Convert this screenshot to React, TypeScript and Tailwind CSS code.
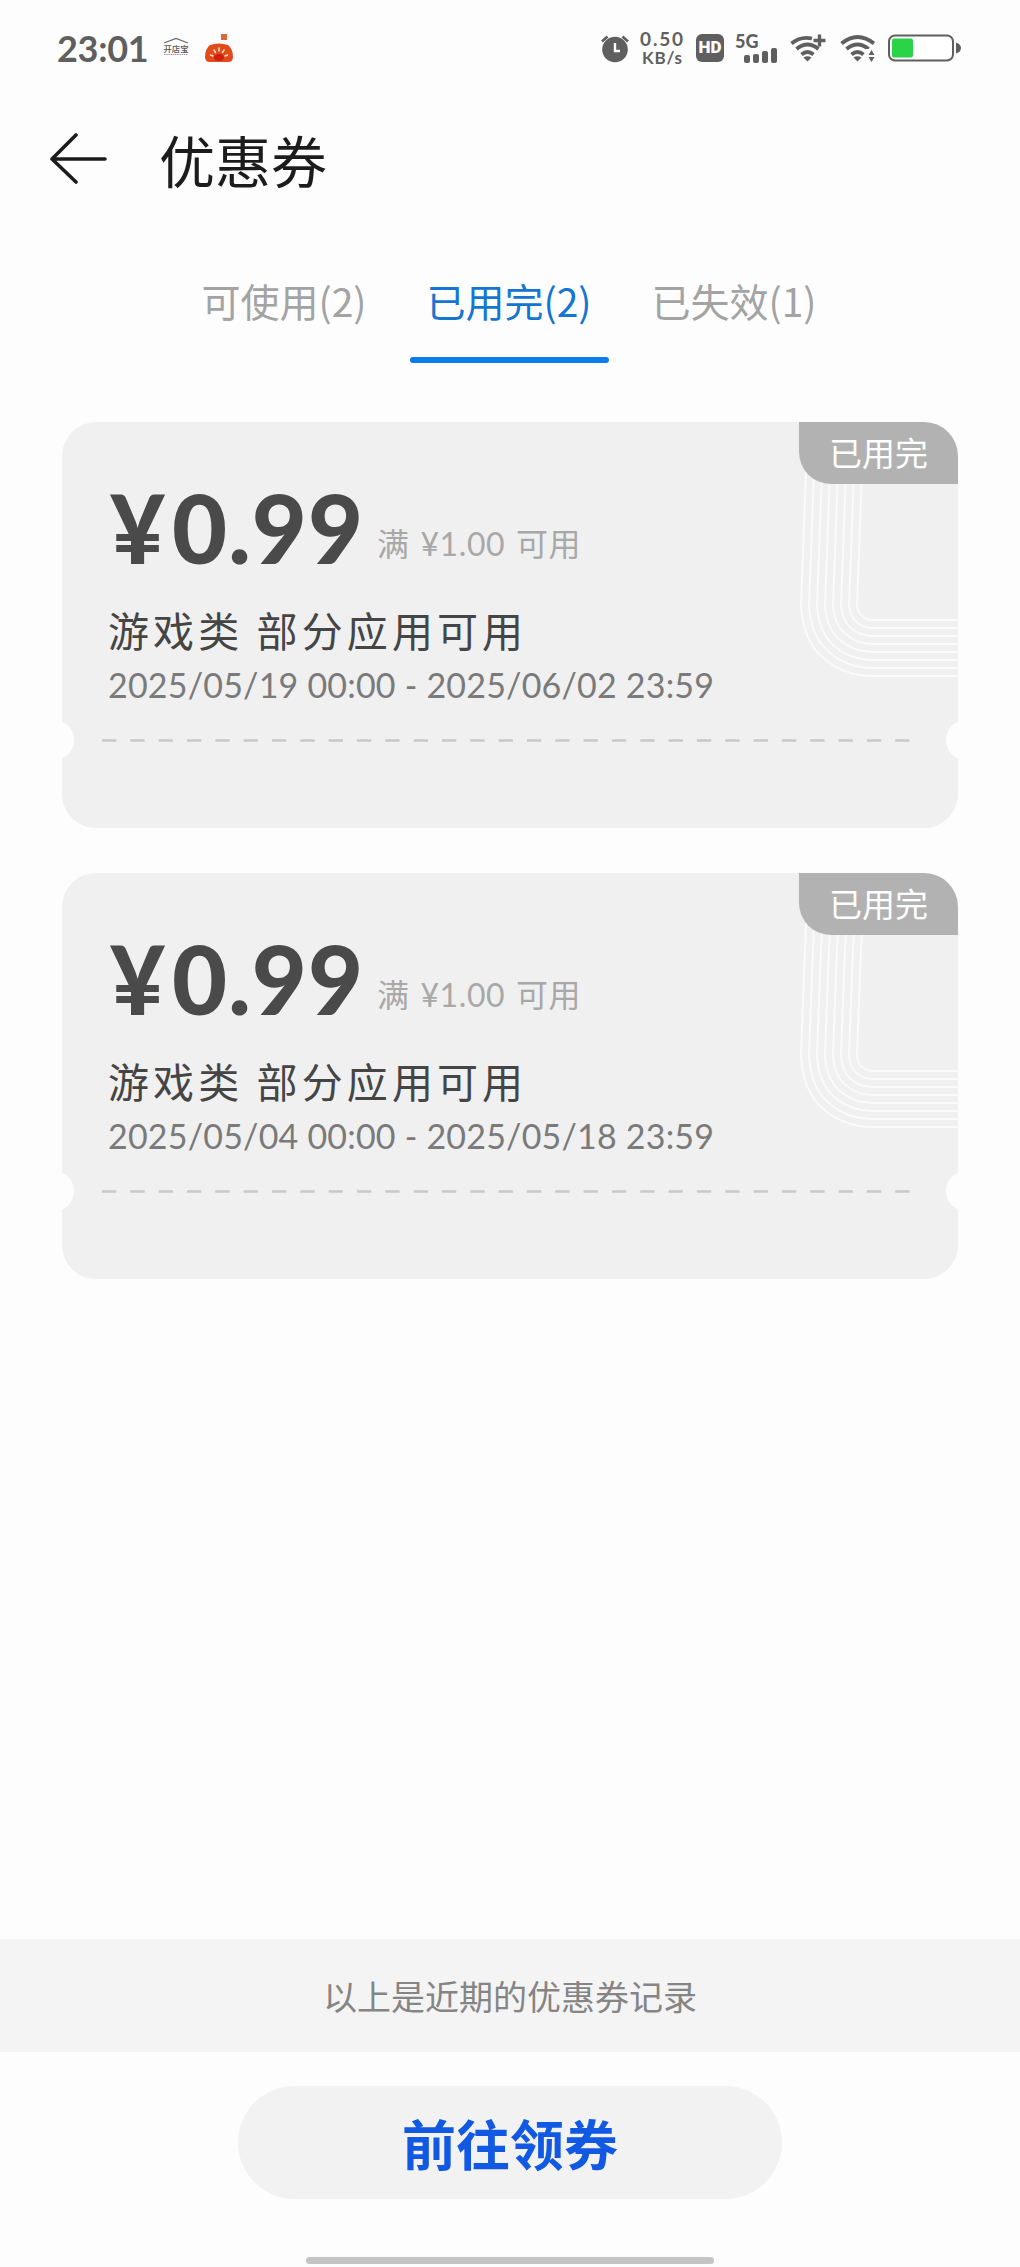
import { useState } from 'react';

// Define types
interface Coupon {
  id: number;
  amount: string;
  minimum: string;
  title: string;
  period: string;
}

const tabs = ['可使用(2)', '已用完(2)', '已失效(1)'];

const coupons: Coupon[] = [
  {
    id: 1,
    amount: '0.99',
    minimum: '满 ¥1.00 可用',
    title: '游戏类 部分应用可用',
    period: '2025/05/19 00:00 - 2025/06/02 23:59',
  },
  {
    id: 2,
    amount: '0.99',
    minimum: '满 ¥1.00 可用',
    title: '游戏类 部分应用可用',
    period: '2025/05/04 00:00 - 2025/05/18 23:59',
  },
];

function ShopLogo() {
  return (
    <svg width="26" height="22" viewBox="0 0 26 22" className="ml-[15px]">
      <path d="M1 6 L13 1.5 L25 6" fill="none" stroke="#666" strokeWidth="1.2" />
      <text x="13" y="14.5" textAnchor="middle" fontSize="8.4" fontWeight="500" fill="#555">
        开店宝
      </text>
      <path d="M1 17.5 H25" stroke="#999" strokeWidth="1" strokeDasharray="1.5 0.7" />
    </svg>
  );
}

function GameLogo() {
  return (
    <svg width="30" height="30" viewBox="0 0 30 30" className="ml-[15px]">
      <rect x="17" y="1" width="6" height="6" fill="#d9653b" />
      <path
        d="M6 12 Q15 9 24 12 Q29 16 29 24 Q29 29 24 29 H6 Q1 29 1 24 Q1 16 6 12Z"
        fill="#e2491b"
      />
      <path
        d="M15 15v3M10 17l1.500 2.500M20 17l-1.500 2.500M6.500 22l2.500 1M23.500 22l-2.500 1"
        stroke="#ffe3c4"
        strokeWidth="1.5"
        strokeLinecap="round"
      />
      <ellipse cx="15" cy="24.500" rx="5" ry="3.500" fill="#d01f12" />
    </svg>
  );
}

function AlarmIcon() {
  return (
    <svg width="30" height="30" viewBox="0 0 30 30">
      <circle cx="15" cy="16.500" r="12.800" fill="#5f5f5f" />
      <path d="M2 8.500 L7.500 3.500 M28 8.500 L22.500 3.500" stroke="#5f5f5f" strokeWidth="2.600" />
      <path d="M15 10 V18 H20" fill="none" stroke="#fdfdfd" strokeWidth="2.400" />
    </svg>
  );
}

function SignalIcon() {
  return (
    <div className="relative h-[30px] w-[43px]">
      <span className="absolute top-0 left-0 font-['Lato'] text-[18px] leading-[16px] font-black">5G</span>
      <svg width="34" height="16" viewBox="0 0 34 16" className="absolute bottom-0 left-[9px]">
        <g fill="#5f5f5f">
          <rect x="0" y="8" width="6" height="8" rx="2" />
          <rect x="9" y="7" width="6" height="9" rx="2" />
          <rect x="18" y="4" width="6" height="12" rx="2" />
          <rect x="27" y="1" width="6" height="15" rx="2" />
        </g>
      </svg>
    </div>
  );
}

function WifiIcon({ variant }: { variant: 'plus' | 'transfer' }) {
  return (
    <svg width="36" height="28" viewBox="0 0 36 28">
      <g fill="none" stroke="#5f5f5f" strokeWidth="3.800">
        <path d={variant === 'plus' ? 'M1.500 9.500 Q10.500 2 22 4.500' : 'M1.500 9.500 Q17.500 -3.500 34 9.500'} />
        <path d="M6.500 15 Q17.500 6 28.500 15" />
        <path d="M11.500 20.500 Q17.500 15.500 23.500 20.500" />
      </g>
      <path d="M13.500 23.500 Q17.500 20.800 21.500 23.500 L17.500 27.500Z" fill="#5f5f5f" />
      {variant === 'plus' ? (
        <path d="M29.500 0.500 V12.500 M23.500 6.500 H35.500" stroke="#5f5f5f" strokeWidth="3.400" />
      ) : (
        <>
          <path d="M26 15 H36 V28 H26Z" fill="#fdfdfd" />
          <path d="M31.500 16 L34.500 21 H28.500Z M31.500 28 L34.500 23 H28.500Z" fill="#5f5f5f" />
        </>
      )}
    </svg>
  );
}

function BatteryIcon() {
  return (
    <svg width="73" height="28" viewBox="0 0 73 28">
      <rect x="1" y="1.500" width="64" height="25" rx="6" fill="#fff" stroke="#5f5f5f" strokeWidth="2" />
      <rect x="4" y="4.500" width="21" height="19" rx="2" fill="#2bd447" />
      <path d="M68 8.500 Q73 10 73 14 Q73 18 68 19.500Z" fill="#5f5f5f" />
    </svg>
  );
}

function StatusBar() {
  return (
    <div className="flex h-[96px] items-center pr-[59px] pl-[57px] text-[#5f5f5f]">
      <span className="font-['Lato'] text-[36px] leading-none font-bold tracking-[-0.300px]">23:01</span>
      <ShopLogo />
      <GameLogo />
      <div className="ml-auto flex items-center">
        <AlarmIcon />
        <div className="ml-[8px] w-[49px] text-center font-['Lato'] text-[19px] leading-[19px] font-bold">
          <div className="tracking-[1.800px]">0.50</div>
          <div className="text-[17px] tracking-[0.800px]">KB/s</div>
        </div>
        <div className="ml-[9px] flex h-[28px] w-[28px] items-center justify-center rounded-[6px] bg-[#5f5f5f] font-['Roboto'] text-[17px] font-black text-white">
          HD
        </div>
        <div className="ml-[11px]">
          <SignalIcon />
        </div>
        <div className="ml-[12px]">
          <WifiIcon variant="plus" />
        </div>
        <div className="ml-[14px]">
          <WifiIcon variant="transfer" />
        </div>
        <div className="ml-[12px]">
          <BatteryIcon />
        </div>
      </div>
    </div>
  );
}

// Curved stripes behind the badge
function CardPattern() {
  return (
    <svg width="159" height="260" viewBox="0 0 159 260" className="absolute top-0 right-0">
      {[0, 1, 2, 3, 4, 5, 6, 7].map((i) => {
        const x = 2 + i * 8;
        const y = 254 - i * 8;
        const r = 72 - i * 8;
        return (
          <path
            key={i}
            d={`M${x + 5} 50 L${x} ${y - r} Q${x + r * 0.02} ${y - r * 0.5} ${x + r * 0.31} ${y - r * 0.25} Q${x + r * 0.6} ${y} ${x + r} ${y} H159`}
            fill="none"
            stroke="#fafafa"
            strokeWidth="2"
          />
        );
      })}
    </svg>
  );
}

function CouponCard({ coupon }: { coupon: Coupon }) {
  return (
    <div className="relative h-[406px] overflow-hidden rounded-[34px] bg-[#f0f0f0] pl-[46px]">
      <CardPattern />
      <div className="absolute top-0 right-0 flex h-[62px] w-[159px] items-center justify-center rounded-bl-[32px] bg-[#b2b2b2] text-[33px] text-white">
        已用完
      </div>

      <div className="flex items-end pt-[48px]">
        <div className="flex gap-[6px] pl-[2px] font-['Lato'] text-[95px] leading-[114px] font-black tracking-[1px] text-[#4a4a4a]">
          <span>¥</span>
          <span>{coupon.amount}</span>
        </div>
        <span className="ml-[13px] pb-[20px] font-['Lato','Noto_Sans_CJK_SC'] text-[32px] leading-[40px] tracking-[0.600px] text-[#a8a8a8] [word-spacing:2px]">
          {coupon.minimum}
        </span>
      </div>
      <div className="mt-[20px] text-[41px] leading-[50px] tracking-[4.100px] text-[#454545]">{coupon.title}</div>
      <div className="mt-[11px] font-['Lato'] text-[34px] leading-[40px] tracking-[0.200px] text-[#7a7a7a]">
        {coupon.period}
      </div>

      {/* Tear line */}
      <svg width="810" height="3" className="absolute top-[317px] left-[40px]">
        <line x1="0" y1="1.500" x2="810" y2="1.500" stroke="#c8c8c8" strokeWidth="2.500" strokeDasharray="14.300 14.030" />
      </svg>
      <div className="absolute top-[298px] left-[-28px] h-[40px] w-[40px] rounded-full bg-[#fdfdfd]" />
      <div className="absolute top-[298px] right-[-28px] h-[40px] w-[40px] rounded-full bg-[#fdfdfd]" />
    </div>
  );
}

export default function App() {
  const [activeTab, setActiveTab] = useState(1);

  return (
    <div className="flex h-[2267px] w-[1020px] flex-col bg-[#fdfdfd] font-['Noto_Sans_CJK_SC',sans-serif]">
      <StatusBar />

      {/* Header */}
      <header className="flex h-[125px] items-center pl-[50px]">
        <svg width="58" height="54" viewBox="0 0 58 54" fill="none" stroke="#1c1c1c" strokeWidth="3.600" strokeLinecap="round" strokeLinejoin="round">
          <path d="M26 3 L2 27 L26 50 M3 27 H55" />
        </svg>
        <h1 className="ml-[51px] text-[56px] leading-none text-[#1c1c1c]">优惠券</h1>
      </header>

      {/* Tabs */}
      <nav className="flex h-[142px] justify-center gap-[26px] pr-[2px]">
        {tabs.map((tab, index) => (
          <button
            key={tab}
            onClick={() => setActiveTab(index)}
            className={`flex w-[199px] flex-col items-center justify-between text-[39px] ${
              index === activeTab ? 'text-[#1476d2]' : 'text-[#a3a3a3]'
            }`}
          >
            <span className="pt-[49px] leading-[60px]">{tab}</span>
            <span className={`h-[6px] w-full rounded-full ${index === activeTab ? 'bg-[#0b7ce9]' : ''}`} />
          </button>
        ))}
      </nav>

      {/* Coupons */}
      <main className="flex flex-1 flex-col gap-[45px] px-[62px] pt-[59px]">
        {coupons.map((coupon) => (
          <CouponCard key={coupon.id} coupon={coupon} />
        ))}
      </main>

      <div className="flex h-[113px] items-center justify-center bg-[#f4f4f4] text-[34px] text-[#858585]">
        以上是近期的优惠券记录
      </div>

      {/* Bottom action */}
      <footer className="flex h-[215px] flex-col items-center pt-[34px]">
        <button className="h-[113px] w-[544px] rounded-full bg-[#f2f2f2] text-[54px] font-bold text-[#1158e2]">
          前往领券
        </button>
        <div className="mt-[58px] h-[7px] w-[408px] rounded-full bg-[#c4c4c4]" />
      </footer>
    </div>
  );
}
